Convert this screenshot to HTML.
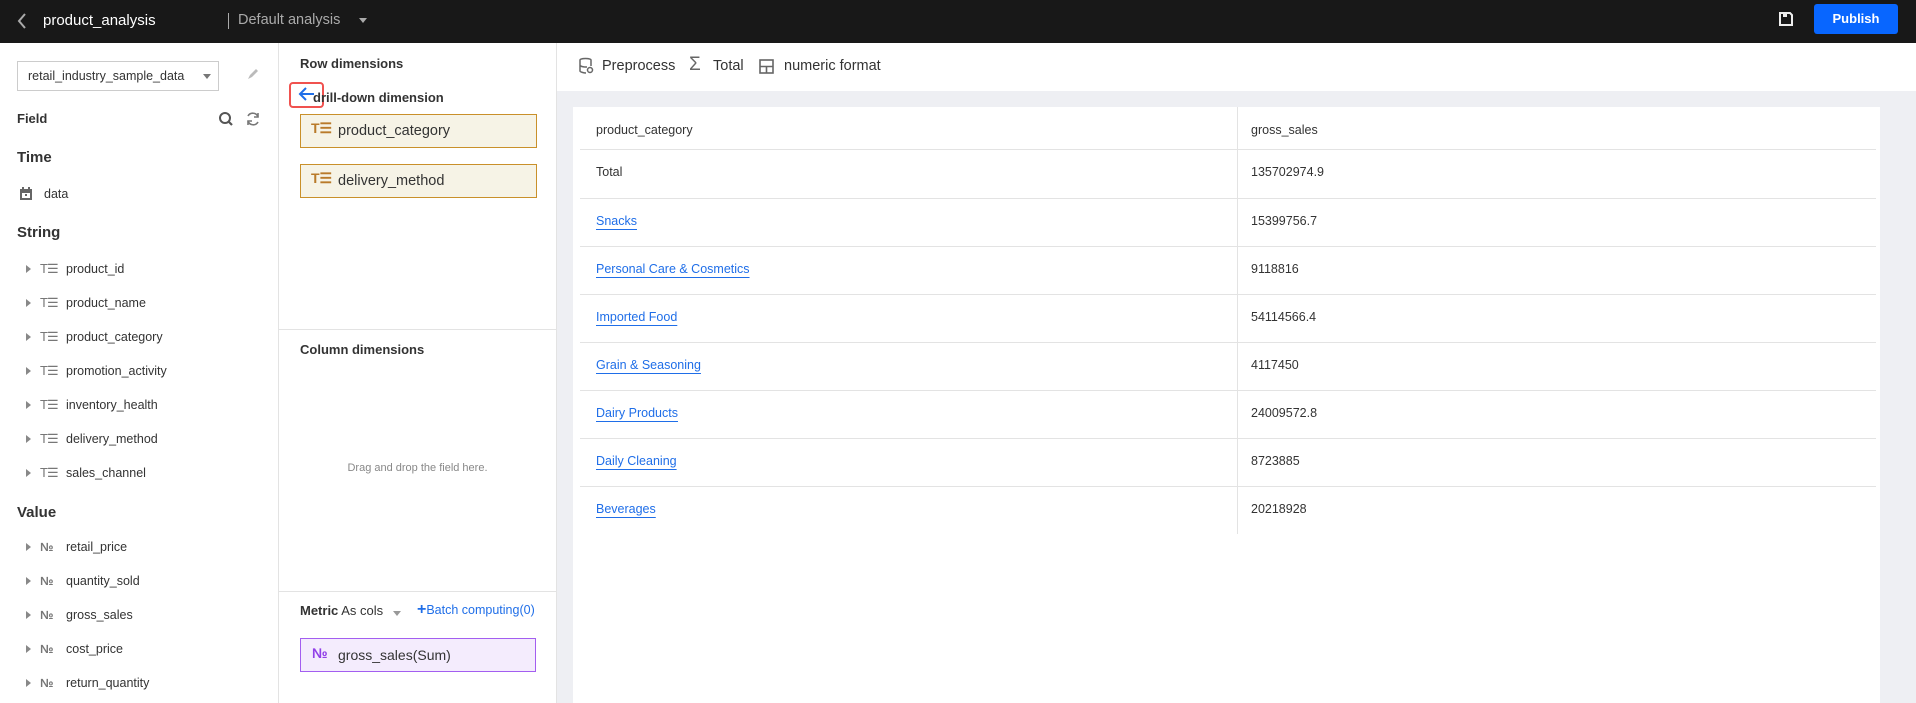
<!DOCTYPE html>
<html><head><meta charset="utf-8"><style>
*{box-sizing:border-box;margin:0;padding:0}
body{width:1916px;height:703px;overflow:hidden;font-family:"Liberation Sans",Arial,sans-serif;color:#333;background:#fff;position:relative}
.a{position:absolute;white-space:nowrap}
.hdr{position:absolute;left:0;top:0;width:1916px;height:43px;background:#181818}
.b{font-weight:bold}
.item{position:absolute;left:26px;font-size:12.5px;color:#333;display:flex;align-items:center}
.tri{width:0;height:0;border-left:5px solid #888;border-top:4px solid transparent;border-bottom:4px solid transparent;margin-right:9px}
.te{font-size:13px;color:#777;width:19px;margin-right:7px;letter-spacing:-1px}
.no{font-size:12px;color:#777;width:19px;margin-right:7px;font-weight:bold}
.rl{position:absolute;left:580px;width:1296px;height:1px;background:#e3e3e3}
.td{position:absolute;font-size:12.5px;color:#333}
.lk{color:#1f6ee8;text-decoration:underline;text-underline-offset:4px}
</style></head><body>
<div class="hdr"></div>
<svg class="a" style="left:16px;top:12px" width="12" height="18"><path d="M9 2L3 9l6 7" stroke="#aaa" stroke-width="2" fill="none"/></svg>
<div class="a" style="left:43px;top:12px;font-size:15px;color:#fff">product_analysis</div>
<div class="a" style="left:228px;top:13px;width:1px;height:16px;background:#aaa"></div>
<div class="a" style="left:238px;top:12px;font-size:14.5px;color:#aaa">Default analysis</div>
<div class="a" style="left:359px;top:18px;border-top:5px solid #aaa;border-left:4px solid transparent;border-right:4px solid transparent"></div>
<svg class="a" style="left:1778px;top:11px" width="16" height="16"><path d="M2 2h10l2 2v10H2z" fill="none" stroke="#eee" stroke-width="2"/><rect x="5" y="2" width="4" height="4" fill="#eee"/></svg>
<div class="a b" style="left:1814px;top:4px;width:84px;height:30px;background:#0866ff;border-radius:3px;color:#fff;font-size:13px;text-align:center;line-height:30px">Publish</div>

<!-- left panel -->
<div class="a" style="left:278px;top:43px;width:1px;height:660px;background:#e3e3e3"></div>
<div class="a" style="left:17px;top:61px;width:202px;height:30px;border:1px solid #ccc;font-size:12.5px;line-height:28px;padding-left:10px">retail_industry_sample_data</div>
<div class="a" style="left:203px;top:74px;border-top:5px solid #777;border-left:4px solid transparent;border-right:4px solid transparent"></div>
<svg class="a" style="left:246px;top:67px" width="14" height="14"><path d="M2 12l2-4 6-6 2 2-6 6z" fill="#bbb"/></svg>
<div class="a b" style="left:17px;top:111px;font-size:13px">Field</div>
<svg class="a" style="left:218px;top:111px" width="16" height="16"><circle cx="7" cy="7" r="5" stroke="#555" stroke-width="2" fill="none"/><path d="M11 11l3 3" stroke="#555" stroke-width="2.2"/></svg>
<svg class="a" style="left:245px;top:111px" width="16" height="16"><path d="M13 6A5.5 5.5 0 0 0 3 5M3 10a5.5 5.5 0 0 0 10 1" stroke="#777" stroke-width="1.6" fill="none"/><path d="M13 2v4h-4M3 14v-4h4" stroke="#777" stroke-width="1.6" fill="none"/></svg>
<div class="a b" style="left:17px;top:149px;font-size:15px">Time</div>
<svg class="a" style="left:19px;top:187px" width="14" height="14"><rect x="1" y="2" width="12" height="11" fill="#666"/><rect x="3" y="6" width="8" height="5" fill="#fff"/><rect x="6" y="7" width="2" height="2" fill="#666"/><rect x="3" y="0" width="2" height="3" fill="#666"/><rect x="9" y="0" width="2" height="3" fill="#666"/></svg>
<div class="a" style="left:44px;top:187px;font-size:12.5px">data</div>
<div class="a b" style="left:17px;top:224px;font-size:15px">String</div>
<div class="item" style="top:261px"><span class="tri"></span><span class="te">T☰</span>product_id</div>
<div class="item" style="top:295px"><span class="tri"></span><span class="te">T☰</span>product_name</div>
<div class="item" style="top:329px"><span class="tri"></span><span class="te">T☰</span>product_category</div>
<div class="item" style="top:363px"><span class="tri"></span><span class="te">T☰</span>promotion_activity</div>
<div class="item" style="top:397px"><span class="tri"></span><span class="te">T☰</span>inventory_health</div>
<div class="item" style="top:431px"><span class="tri"></span><span class="te">T☰</span>delivery_method</div>
<div class="item" style="top:465px"><span class="tri"></span><span class="te">T☰</span>sales_channel</div>
<div class="a b" style="left:17px;top:504px;font-size:15px">Value</div>
<div class="item" style="top:540px"><span class="tri"></span><span class="no">№</span>retail_price</div>
<div class="item" style="top:574px"><span class="tri"></span><span class="no">№</span>quantity_sold</div>
<div class="item" style="top:608px"><span class="tri"></span><span class="no">№</span>gross_sales</div>
<div class="item" style="top:642px"><span class="tri"></span><span class="no">№</span>cost_price</div>
<div class="item" style="top:676px"><span class="tri"></span><span class="no">№</span>return_quantity</div>

<!-- middle -->
<div class="a" style="left:556px;top:43px;width:1px;height:660px;background:#e3e3e3"></div>
<div class="a b" style="left:300px;top:56px;font-size:13px">Row dimensions</div>
<div class="a" style="left:289px;top:82px;width:35px;height:26px;border:2px solid #f0524f;border-radius:4px"></div>
<svg class="a" style="left:298px;top:86px" width="18" height="16"><path d="M16 8H3M8 2L2 8l6 6" stroke="#1f6ee8" stroke-width="2" fill="none"/></svg>
<div class="a b" style="left:313px;top:90px;font-size:13px">drill-down dimension</div>
<div class="a" style="left:300px;top:114px;width:237px;height:34px;border:1px solid #c9902a;background:#f6f3e6;font-size:14.5px;line-height:32px;padding-left:37px">product_category</div>
<div class="a b" style="left:311px;top:120px;font-size:14px;color:#b97a2a">T☰</div>
<div class="a" style="left:300px;top:164px;width:237px;height:34px;border:1px solid #c9902a;background:#f6f3e6;font-size:14.5px;line-height:32px;padding-left:37px">delivery_method</div>
<div class="a b" style="left:311px;top:170px;font-size:14px;color:#b97a2a">T☰</div>
<div class="a" style="left:279px;top:329px;width:277px;height:1px;background:#e3e3e3"></div>
<div class="a b" style="left:300px;top:342px;font-size:13px">Column dimensions</div>
<div class="a" style="left:279px;top:462px;width:277px;text-align:center;font-size:11px;color:#888">Drag and drop the field here.</div>
<div class="a" style="left:279px;top:591px;width:277px;height:1px;background:#e3e3e3"></div>
<div class="a" style="left:300px;top:603px;font-size:13px"><b>Metric</b> As cols</div>
<div class="a" style="left:393px;top:611px;border-top:5px solid #999;border-left:4px solid transparent;border-right:4px solid transparent"></div>
<div class="a" style="left:417px;top:603px;font-size:12.5px;color:#1f6ee8"><b style="font-size:16px;line-height:12px">+</b>Batch computing(0)</div>
<div class="a" style="left:300px;top:638px;width:236px;height:34px;border:1px solid #a35ef0;background:#f4ecfd;font-size:14px;line-height:32px;padding-left:37px">gross_sales(Sum)</div>
<div class="a b" style="left:312px;top:645px;font-size:14px;color:#9140e8">№</div>

<!-- right -->
<div class="a" style="left:557px;top:91px;width:1359px;height:612px;background:#eeeff3"></div>
<svg class="a" style="left:578px;top:57px" width="16" height="18"><path d="M2 3c0-2 11-2 11 0v6M2 3v11c0 1 4 2 6 2M2 8c0 1.5 4 2 7 2" stroke="#666" stroke-width="1.5" fill="none"/><circle cx="12" cy="13" r="2.5" stroke="#666" stroke-width="1.5" fill="none"/></svg>
<div class="a" style="left:602px;top:58px;font-size:14.5px">Preprocess</div>
<div class="a" style="left:689px;top:54px;font-size:19px;color:#666">Σ</div>
<div class="a" style="left:713px;top:58px;font-size:14.5px">Total</div>
<svg class="a" style="left:759px;top:59px" width="15" height="15"><rect x="1" y="1" width="13" height="13" stroke="#666" stroke-width="1.6" fill="none"/><path d="M1 7.5h13M7.5 7.5v6.5" stroke="#666" stroke-width="1.6"/></svg>
<div class="a" style="left:784px;top:58px;font-size:14.5px">numeric format</div>

<div class="a" style="left:573px;top:107px;width:1307px;height:596px;background:#fff"></div>
<div class="a" style="left:1237px;top:107px;width:1px;height:427px;background:#e3e3e3"></div>
<div class="rl" style="top:149px"></div><div class="rl" style="top:198px"></div><div class="rl" style="top:246px"></div><div class="rl" style="top:294px"></div><div class="rl" style="top:342px"></div><div class="rl" style="top:390px"></div><div class="rl" style="top:438px"></div><div class="rl" style="top:486px"></div>
<div class="td" style="left:596px;top:123px">product_category</div><div class="td" style="left:1251px;top:123px">gross_sales</div>
<div class="td" style="left:596px;top:165px">Total</div><div class="td" style="left:1251px;top:165px">135702974.9</div>
<div class="td lk" style="left:596px;top:214px">Snacks</div><div class="td" style="left:1251px;top:214px">15399756.7</div>
<div class="td lk" style="left:596px;top:262px">Personal Care &amp; Cosmetics</div><div class="td" style="left:1251px;top:262px">9118816</div>
<div class="td lk" style="left:596px;top:310px">Imported Food</div><div class="td" style="left:1251px;top:310px">54114566.4</div>
<div class="td lk" style="left:596px;top:358px">Grain &amp; Seasoning</div><div class="td" style="left:1251px;top:358px">4117450</div>
<div class="td lk" style="left:596px;top:406px">Dairy Products</div><div class="td" style="left:1251px;top:406px">24009572.8</div>
<div class="td lk" style="left:596px;top:454px">Daily Cleaning</div><div class="td" style="left:1251px;top:454px">8723885</div>
<div class="td lk" style="left:596px;top:502px">Beverages</div><div class="td" style="left:1251px;top:502px">20218928</div>
</body></html>
